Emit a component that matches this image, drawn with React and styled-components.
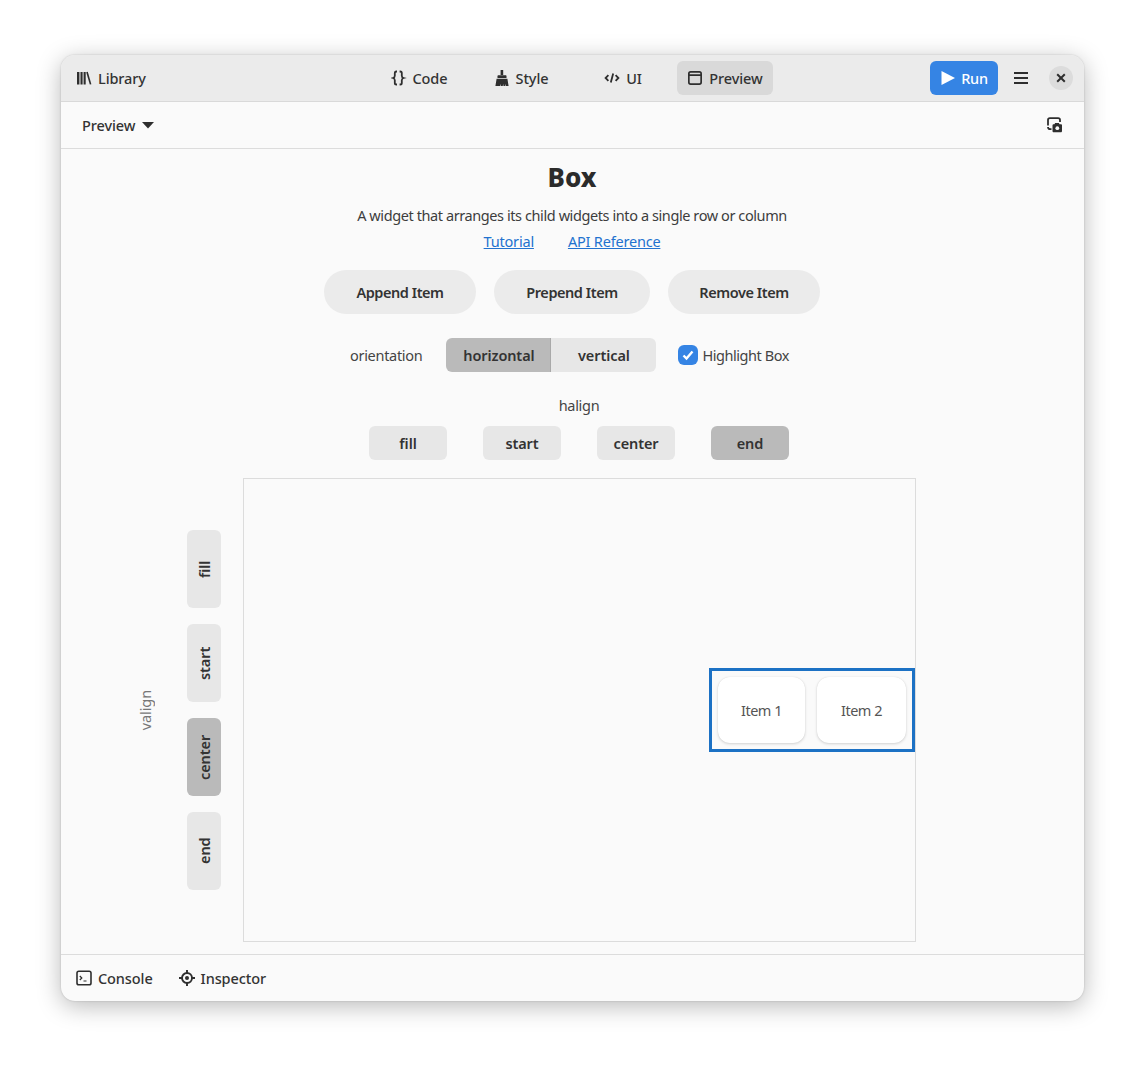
import React from "react";
import styled, { createGlobalStyle } from "styled-components";

const Global = createGlobalStyle`
  html, body { margin: 0; background: #fff; }
  body { font-family: "Noto Sans", "Open Sans", sans-serif; color: #2e2e2e; }
  * { box-sizing: border-box; }
`;
const Page = styled.div`
  width: 1145px; height: 1068px; padding: 55px 61px 67px;
`;
const Window = styled.div`
  width: 1023px; height: 946px; border-radius: 14px; overflow: hidden;
  background: #fafafa; display: flex; flex-direction: column;
  box-shadow: 0 5px 24px rgba(0,0,0,.28), 0 0 2px rgba(0,0,0,.2);
`;
const Header = styled.header`
  height: 47px; flex: none; background: #ebebeb; border-bottom: 1px solid #d9d9d9;
  display: grid; grid-template-columns: 1fr auto 1fr; align-items: center; padding: 0 11px 0 10px;
`;
const Flat = styled.div`
  display: flex; align-items: center; gap: ${p => p.$gap ?? 6}px; margin-left: ${p => p.$inset ?? 0}px;
  font-size: 14.5px; font-weight: 500; color: #333; white-space: nowrap; letter-spacing: -.1px;
`;
const Tabs = styled.nav`display: flex; gap: 6px;`;
const Tab = styled.div`
  width: 96px; height: 34px; border-radius: 6px; display: flex; align-items: center; justify-content: center; gap: 6px;
  font-size: 14.5px; font-weight: 500; color: #333; letter-spacing: -.1px;
  background: ${p => p.$active ? "#d9d9d9" : "transparent"};
`;
const HeaderEnd = styled.div`display: flex; justify-content: flex-end; align-items: center;`;
const RunButton = styled.div`
  width: 68px; height: 34px; border-radius: 6px; background: #3584e4; color: #fff;
  display: flex; align-items: center; justify-content: center; gap: 5px; font-size: 14.5px; font-weight: 500; letter-spacing: -.2px;
`;
const MenuIcon = styled.div`width: 46px; display: flex; justify-content: center;`;
const CloseButton = styled.div`
  width: 24px; height: 24px; border-radius: 50%; background: #dcdcdc;
  display: flex; align-items: center; justify-content: center; margin-left: 5px;
`;
const Toolbar = styled.div`
  height: 47px; flex: none; border-bottom: 1px solid #dcdcdc; display: flex; align-items: center;
  justify-content: space-between; padding: 0 21px;
`;
const Main = styled.main`flex: 1; display: flex; flex-direction: column; align-items: center; padding: 14px 1px 0 0;`;
const Title = styled.h1`margin: 0; font-size: 26px; line-height: 28px; font-weight: 800; color: #2b2b2b;`;
const Desc = styled.p`margin: 14px 0 0; font-size: 14.5px; line-height: 20px; color: #3d3d3d; letter-spacing: -.41px;`;
const Links = styled.div`margin-top: 6px; display: flex; gap: 34px; font-size: 14.5px; line-height: 20px; letter-spacing: -.2px;`;
const LinkText = styled.a`color: #2272cf; text-decoration: underline;`;
const Actions = styled.div`margin-top: 19px; display: flex; gap: 18px;`;
const Pill = styled.div`
  height: 44px; width: ${p => p.$w}px; border-radius: 22px; background: #ebebeb;
  display: flex; align-items: center; justify-content: center; font-size: 14.5px; font-weight: 600; color: #333; letter-spacing: -.45px;
`;
const OrientationRow = styled.div`
  margin: 24px 0 0 289px; align-self: flex-start; display: flex; align-items: center; height: 34px;
`;
const PlainLabel = styled.span`font-size: 14.5px; color: #444; line-height: 20px; white-space: nowrap; letter-spacing: ${p => p.$tight ? "-.45px" : "-.3px"};`;
const Segmented = styled.div`display: flex; margin-left: 24px; border-radius: 6px; overflow: hidden;`;
const Segment = styled.div`
  width: 105px; height: 34px; display: flex; align-items: center; justify-content: center;
  font-size: 14.5px; font-weight: 600; color: #333; letter-spacing: -.1px;
  background: ${p => p.$active ? "#bababa" : "#e7e7e7"};
  box-shadow: ${p => p.$active ? "inset -1px 0 #a9a9a9" : "none"};
`;
const CheckWrap = styled.div`margin-left: 22px; display: flex; align-items: center; gap: 4px;`;
const Check = styled.div`
  width: 20px; height: 20px; border-radius: 6px; background: #3584e4; display: flex; align-items: center; justify-content: center;
`;
const Demo = styled.div`
  align-self: flex-start; margin: 23px 0 0 76px; display: grid; grid-template-columns: 50px 56px 673px; grid-template-rows: auto 464px; row-gap: 18px;
`;
const HAlign = styled.div`grid-column: 3; display: flex; flex-direction: column; align-items: center; gap: 11px; padding-right: 1px;`;
const HButtons = styled.div`display: flex; gap: 36px;`;
const Choice = styled.div`
  width: 78px; height: 34px; border-radius: 6px; display: flex; align-items: center; justify-content: center;
  font-size: 14.5px; font-weight: 600; color: #333; letter-spacing: -.1px; background: ${p => p.$active ? "#bababa" : "#e7e7e7"};
`;
const VLabel = styled.div`
  grid-column: 1; grid-row: 2; align-self: center; justify-self: start; margin-left: -2px; width: 20px; display: flex; justify-content: center;
  writing-mode: vertical-rl; transform: rotate(180deg); font-size: 14.5px; color: #777; letter-spacing: -.1px;
`;
const VButtons = styled.div`grid-column: 2; grid-row: 2; align-self: center; display: flex; flex-direction: column; gap: 16px;`;
const VChoice = styled.div`
  width: 34px; height: 78px; border-radius: 6px; display: flex; align-items: center; justify-content: center;
  background: ${p => p.$active ? "#bababa" : "#e7e7e7"};
  font-size: 14.5px; font-weight: 600; color: #333; letter-spacing: -.1px; writing-mode: vertical-rl; transform: rotate(180deg);
`;
const Canvas = styled.div`
  grid-column: 3; grid-row: 2; border: 1px solid #dcdcdc; display: flex; align-items: center; justify-content: flex-end;
`;
const Highlight = styled.div`
  width: 206px; height: 84px; border: 3px solid #1c71c4; padding: 6px; display: flex; gap: 12px;
`;
const Item = styled.div`
  width: ${p => p.$w}px; border-radius: 12px; background: #fff; display: flex; align-items: center; justify-content: center;
  font-size: 14.5px; color: #555; letter-spacing: -.5px; box-shadow: 0 1px 3px rgba(0,0,0,.16), 0 0 1px rgba(0,0,0,.1);
`;
const Footer = styled.footer`
  height: 47px; flex: none; border-top: 1px solid #dcdcdc; display: flex; align-items: center; gap: 26px; padding: 0 15px;
`;

const Ic = ({ children, w = 16, h = 16, fill = "none", stroke = "#2e2e2e", sw = 1.6 }) => (
  <svg width={w} height={h} viewBox={`0 0 ${w} ${h}`} fill={fill} stroke={stroke} strokeWidth={sw} style={{ flex: "none" }}>{children}</svg>
);

export default function App() {
  return (
    <Page>
      <Global />
      <Window>
        <Header>
          <Flat $inset={5}>
            <Ic sw={0} fill="#2e2e2e">
              <path d="M1 2h2.4v12.5H1zM4.5 2h2.1v12.5H4.5zM7.6 2h2.1v12.5H7.6z" />
              <path d="M10.2 2.2l1.6-.4 3.6 12.4-1.6.4z" />
            </Ic>
            Library
          </Flat>
          <Tabs>
            <Tab>
              <Ic sw={1.8}>
                <path d="M6 1.5h-.6c-1.1 0-1.6.6-1.6 1.6v2.6c0 1.1-.4 1.9-1.8 2.3 1.4.4 1.8 1.2 1.8 2.3v2.6c0 1 .5 1.6 1.6 1.6H6" />
                <path d="M8.6 1.5h.6c1.1 0 1.6.6 1.6 1.6v2.6c0 1.1.4 1.9 1.8 2.3-1.4.4-1.8 1.2-1.8 2.3v2.6c0 1-.5 1.6-1.6 1.6h-.6" />
              </Ic>
              Code
            </Tab>
            <Tab>
              <Ic sw={0} fill="#2e2e2e">
                <path d="M6.6 0h2.6v5h-2.6z" />
                <path d="M3.5 6.2c0-.6.4-1 1-1h7c.6 0 1 .4 1 1V8h-9z" />
                <path d="M2.6 8.8h10.8l1.2 7.2h-2.6l-.5-2.2-.2 2.2H9.5l-.4-2.2-.3 2.2H6.7l-.3-2.2-.4 2.2H1.4z" />
              </Ic>
              Style
            </Tab>
            <Tab>
              <Ic sw={1.8}>
                <path d="M4.4 5.2L1.6 8l2.8 2.8M11.6 5.2L14.4 8l-2.8 2.8" />
                <path d="M9.2 3.5L6.8 12.5" />
              </Ic>
              UI
            </Tab>
            <Tab $active>
              <Ic sw={1.7}>
                <rect x="1.85" y="1.85" width="12.3" height="12.3" rx="1.8" />
                <path d="M2 5.2h12" />
              </Ic>
              Preview
            </Tab>
          </Tabs>
          <HeaderEnd>
            <RunButton>
              <Ic sw={0} fill="#fff"><path d="M1.5 1L15 8 1.5 15z" /></Ic>
              Run
            </RunButton>
            <MenuIcon>
              <Ic sw={1.8}><path d="M1 3h14M1 8h14M1 13h14" /></Ic>
            </MenuIcon>
            <CloseButton>
              <Ic w={10} h={10} sw={2}><path d="M1.2 1.2l7.6 7.6M8.8 1.2l-7.6 7.6" /></Ic>
            </CloseButton>
          </HeaderEnd>
        </Header>
        <Toolbar>
          <Flat $gap={7}>
            Preview
            <Ic w={12} h={7} sw={0} fill="#2e2e2e"><path d="M0 0h12L6 6.5z" /></Ic>
          </Flat>
          <Ic sw={1.8}>
            <path d="M1 8.5V3c0-1.1.8-1.9 1.9-1.9h8.2c1.1 0 1.9.8 1.9 1.9v2M1 10c0 1.4.9 2.2 2.2 2.2H4.5" />
            <path d="M8.2 6h3.6l.8 1.3h1.2c.8 0 1.2.5 1.2 1.2V14c0 .8-.5 1.3-1.2 1.3H6.8c-.8 0-1.3-.5-1.3-1.3V8.5c0-.7.5-1.2 1.3-1.2h.6z" fill="#2e2e2e" stroke="none" />
            <circle cx="10.3" cy="11.2" r="1.9" fill="#fafafa" stroke="none" />
          </Ic>
        </Toolbar>
        <Main>
          <Title>Box</Title>
          <Desc>A widget that arranges its child widgets into a single row or column</Desc>
          <Links>
            <LinkText>Tutorial</LinkText>
            <LinkText>API Reference</LinkText>
          </Links>
          <Actions>
            <Pill $w={152}>Append Item</Pill>
            <Pill $w={156}>Prepend Item</Pill>
            <Pill $w={152}>Remove Item</Pill>
          </Actions>
          <OrientationRow>
            <PlainLabel>orientation</PlainLabel>
            <Segmented>
              <Segment $active>horizontal</Segment>
              <Segment>vertical</Segment>
            </Segmented>
            <CheckWrap>
              <Check>
                <Ic w={14} h={14} stroke="#fff" sw={2.4}><path d="M2.5 7.5l3 3 6-7" /></Ic>
              </Check>
              <PlainLabel $tight>Highlight Box</PlainLabel>
            </CheckWrap>
          </OrientationRow>
          <Demo>
            <HAlign>
              <PlainLabel>halign</PlainLabel>
              <HButtons>
                <Choice>fill</Choice>
                <Choice>start</Choice>
                <Choice>center</Choice>
                <Choice $active>end</Choice>
              </HButtons>
            </HAlign>
            <VLabel>valign</VLabel>
            <VButtons>
              <VChoice>fill</VChoice>
              <VChoice>start</VChoice>
              <VChoice $active>center</VChoice>
              <VChoice>end</VChoice>
            </VButtons>
            <Canvas>
              <Highlight>
                <Item $w={87}>Item 1</Item>
                <Item $w={89}>Item 2</Item>
              </Highlight>
            </Canvas>
          </Demo>
        </Main>
        <Footer>
          <Flat>
            <Ic sw={1.6}>
              <rect x="1" y="1.3" width="14" height="13.4" rx="1.8" />
              <path d="M3.8 6l2 2-2 2M7.5 11h3" strokeWidth="1.2" />
            </Ic>
            Console
          </Flat>
          <Flat>
            <Ic sw={1.9}>
              <circle cx="8" cy="8" r="5" />
              <circle cx="8" cy="8" r="2" fill="#2e2e2e" stroke="none" />
              <path d="M8 0v3M8 13v3M0 8h3M13 8h3" />
            </Ic>
            Inspector
          </Flat>
        </Footer>
      </Window>
    </Page>
  );
}
